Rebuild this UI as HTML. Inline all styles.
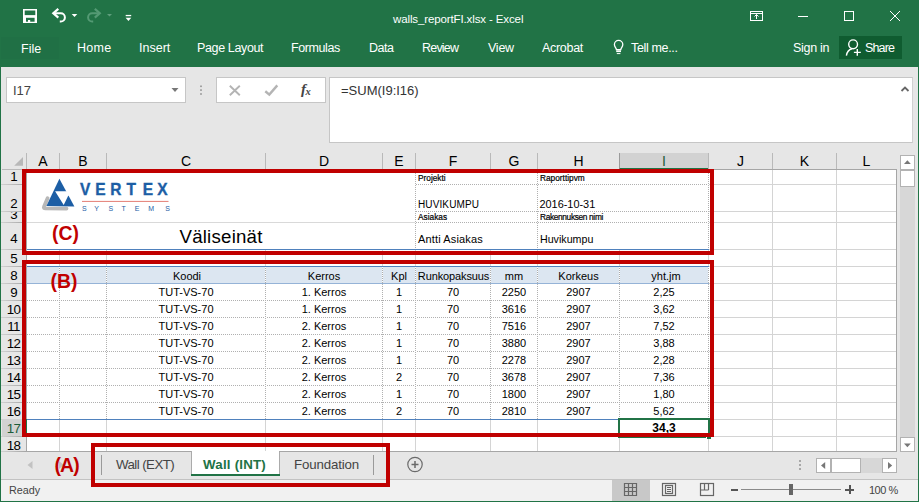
<!DOCTYPE html>
<html><head><meta charset="utf-8"><title>walls_reportFI.xlsx - Excel</title>
<style>
html,body{margin:0;padding:0;}
body{width:919px;height:502px;overflow:hidden;background:#e6e6e6;font-family:"Liberation Sans",sans-serif;}
#w{position:relative;width:919px;height:502px;overflow:hidden;background:#e6e6e6;}
#w div,#w span,#w svg{position:absolute;box-sizing:border-box;}
.t{white-space:nowrap;line-height:1;}
.rt{color:#fff;font-size:12.5px;top:42px;}
.ch{top:153px;height:16px;font-size:14px;text-align:center;line-height:17px;color:#000;}
.rh{left:1.5px;width:24px;font-size:13.33px;letter-spacing:-0.75px;text-align:center;color:#000;}
.c{font-size:11px;text-align:center;line-height:17px;height:17px;color:#000;white-space:nowrap;}
.s{font-size:8.3px;color:#000;white-space:nowrap;line-height:1;-webkit-text-stroke:0.2px #000;}
.v{color:#000;white-space:nowrap;line-height:1;}
.red{color:#c00000;font-weight:bold;font-size:19.4px;white-space:nowrap;line-height:1;}
.box{border:4px solid #c00000;}
</style></head><body><div id="w">

<div style="left:0;top:0;width:919px;height:67px;background:#217346"></div>
<div style="left:1px;top:37px;width:58px;height:22px;background:#207045"></div>
<svg style="left:0;top:0" width="160" height="34" viewBox="0 0 160 34">
<rect x="23" y="9" width="14" height="14" fill="#fff"/>
<rect x="24.700" y="10.500" width="10.600" height="4.600" fill="#217346"/>
<rect x="26" y="17.800" width="8.600" height="3.900" fill="#217346"/>
<rect x="28" y="20" width="2.200" height="2" fill="#fff"/>
<g fill="none" stroke="#fff" stroke-width="2" stroke-linecap="butt">
<path d="M54 13.300h6.800a4.100 4.100 0 0 1 0 8.200h-1"/>
<path d="M58.300 8.800l-5 4.400 5 4.400" stroke-width="2.200"/>
</g>
<path d="M71.700 14h5.600l-2.800 3z" fill="#fff"/>
<g fill="none" stroke="#549a74" stroke-width="2">
<path d="M99 13.300h-6.800a4.100 4.100 0 0 0 0 8.200h1"/>
<path d="M94.800 8.800l5 4.400-5 4.400" stroke-width="2.200"/>
</g>
<path d="M107 14h5l-2.500 2.500z" fill="#5f9e7c"/>
<rect x="125.700" y="14.900" width="5.500" height="1.300" fill="#fff"/>
<path d="M125.600 17.700h5.700l-2.850 3.300z" fill="#fff"/>
</svg>
<span class="t" style="left:393px;top:14px;color:#fff;font-size:11.5px;letter-spacing:-0.12px;">walls_reportFI.xlsx - Excel</span>
<svg style="left:740px;top:0" width="179" height="34" viewBox="740 0 179 34" fill="none" stroke="#fff" stroke-width="1">
<rect x="750.500" y="11.500" width="12" height="9"/><path d="M750.500 13.500h12" />
<path d="M756.500 19v-4.500M754.500 16.500l2-2 2 2"/>
<path d="M798 16.500h10"/>
<rect x="844.500" y="11.500" width="9" height="9"/>
<path d="M890 11l10 10M900 11l-10 10"/>
</svg>
<span class="t rt" style="left:21px;top:43px;">File</span>
<span class="t rt" style="left:77px;letter-spacing:0.3px;">Home</span>
<span class="t rt" style="left:139px;">Insert</span>
<span class="t rt" style="left:197px;letter-spacing:-0.36px;">Page Layout</span>
<span class="t rt" style="left:291px;letter-spacing:-0.4px;">Formulas</span>
<span class="t rt" style="left:369px;letter-spacing:-0.5px;">Data</span>
<span class="t rt" style="left:422px;letter-spacing:-0.8px;">Review</span>
<span class="t rt" style="left:488px;letter-spacing:-0.25px;">View</span>
<span class="t rt" style="left:542px;letter-spacing:-0.3px;">Acrobat</span>
<span class="t rt" style="left:631px;letter-spacing:-0.35px;">Tell me...</span>
<span class="t rt" style="left:793px;letter-spacing:-0.3px;">Sign in</span>
<svg style="left:610px;top:38px" width="16" height="20" viewBox="0 0 16 20" fill="none" stroke="#fff" stroke-width="1.300">
<path d="M6.400 11.600c0-1.700-2-2.500-2-5a4.200 4.200 0 0 1 8.400 0c0 2.500-2 3.300-2 5z"/><path d="M6.200 13.200h4.800" stroke-width="1.800"/><path d="M6.800 15.600h3.600" stroke-width="1"/></svg>
<div style="left:839px;top:36px;width:63px;height:23px;background:#0f5c30"></div>
<svg style="left:844px;top:38px" width="20" height="20" viewBox="0 0 20 20" fill="none" stroke="#fff" stroke-width="1.400">
<circle cx="9.100" cy="6.300" r="4.400"/><path d="M2.400 17.600c0.600-3.800 2.600-6 5.600-6.800"/><path d="M13.300 11v6.800M9.900 14.400h6.900"/></svg>
<span class="t rt" style="left:865px;letter-spacing:-0.85px">Share</span>
<div style="left:6px;top:77px;width:180px;height:26px;background:#fff;border:1px solid #c6c6c6"></div>
<span class="t" style="left:13px;top:84px;font-size:13px;color:#444">I17</span>
<svg style="left:170px;top:86px" width="10" height="8"><path d="M1.500 2h7l-3.500 4z" fill="#777"/></svg>
<svg style="left:199px;top:84px" width="4" height="12"><g fill="#a2a2a2"><rect x="1" y="1.500" width="2" height="1.600"/><rect x="1" y="5.300" width="2" height="1.600"/><rect x="1" y="9.200" width="2" height="1.600"/></g></svg>
<div style="left:216px;top:77px;width:110px;height:26px;background:#fff;border:1px solid #c6c6c6"></div>
<svg style="left:225px;top:82px" width="60" height="16" viewBox="225 82 60 16" fill="none" stroke="#b4b4b4" stroke-width="1.600">
<path d="M229.800 85.800l10 9.400M239.800 85.800l-10 9.400" stroke-width="1.900"/><path d="M265.300 91.300l4 3.300 8-9.200" stroke-width="2.400"/></svg>
<span class="t" style="left:301px;top:82px;font-family:'Liberation Serif',serif;font-style:italic;font-size:15px;color:#444;font-weight:bold;letter-spacing:-0.5px">f<span style="position:static;font-size:10.5px;vertical-align:-1px">x</span></span>
<div style="left:329px;top:77px;width:584px;height:66px;background:#fff;border:1px solid #c6c6c6;border-right-color:#d0d0d0"></div>
<span class="t" style="left:341px;top:84px;font-size:13px;color:#333">=SUM(I9:I16)</span>
<svg style="left:900px;top:84px" width="10" height="9" fill="none" stroke="#666" stroke-width="1.800"><path d="M1.500 7l3.500-3.500 3.500 3.500"/></svg>
<div style="left:2px;top:153px;width:895px;height:17px;background:#e6e6e6;border-bottom:1px solid #a6a6a6"></div>
<div style="left:27px;top:170px;width:870px;height:282px;background:#fff;border-right:1px solid #a6a6a6;border-bottom:1px solid #a6a6a6"></div>
<svg style="left:12px;top:156px" width="14" height="12"><path d="M11 1v8.800h-8.800z" fill="#b8b8b8"/></svg>
<div style="left:2px;top:169px;width:24px;height:1px;background:#b9b9b9"></div>
<div class="ch" style="left:27px;width:32px;">A</div>
<div style="left:59px;top:153px;width:1px;height:16px;background:#b9b9b9"></div>
<div class="ch" style="left:60px;width:46px;">B</div>
<div style="left:106px;top:153px;width:1px;height:16px;background:#b9b9b9"></div>
<div class="ch" style="left:107px;width:158px;">C</div>
<div style="left:265px;top:153px;width:1px;height:16px;background:#b9b9b9"></div>
<div class="ch" style="left:266px;width:116px;">D</div>
<div style="left:382px;top:153px;width:1px;height:16px;background:#b9b9b9"></div>
<div class="ch" style="left:383px;width:32px;">E</div>
<div style="left:415px;top:153px;width:1px;height:16px;background:#b9b9b9"></div>
<div class="ch" style="left:416px;width:74px;">F</div>
<div style="left:490px;top:153px;width:1px;height:16px;background:#b9b9b9"></div>
<div class="ch" style="left:491px;width:46px;">G</div>
<div style="left:537px;top:153px;width:1px;height:16px;background:#b9b9b9"></div>
<div class="ch" style="left:538px;width:81px;">H</div>
<div style="left:619px;top:153px;width:1px;height:16px;background:#b9b9b9"></div>
<div style="left:619px;top:153px;width:89px;height:17px;background:#d2d2d2;border-bottom:2px solid #217346;border-left:1px solid #9b9b9b"></div>
<div class="ch" style="left:620px;width:88px;color:#1c5c3a;">I</div>
<div style="left:708px;top:153px;width:1px;height:16px;background:#b9b9b9"></div>
<div class="ch" style="left:709px;width:63px;">J</div>
<div style="left:772px;top:153px;width:1px;height:16px;background:#b9b9b9"></div>
<div class="ch" style="left:773px;width:63px;">K</div>
<div style="left:836px;top:153px;width:1px;height:16px;background:#b9b9b9"></div>
<div class="ch" style="left:837px;width:59px;">L</div>
<div style="left:26px;top:153px;width:1px;height:16px;background:#b9b9b9"></div>
<div class="rh" style="top:167px;height:17px;line-height:19px;">1</div>
<div style="left:1px;top:184px;width:25px;height:1px;background:linear-gradient(90deg,#d2d2d2,#a4a4a4)"></div>
<div class="rh" style="top:194px;height:17px;line-height:19px;">2</div>
<div style="left:1px;top:211px;width:25px;height:1px;background:linear-gradient(90deg,#d2d2d2,#a4a4a4)"></div>
<div class="rh" style="top:212px;height:10px;line-height:5px;overflow:hidden">3</div>
<div style="left:1px;top:222px;width:25px;height:1px;background:linear-gradient(90deg,#d2d2d2,#a4a4a4)"></div>
<div class="rh" style="top:229px;height:17px;line-height:19px;">4</div>
<div style="left:1px;top:249px;width:25px;height:1px;background:linear-gradient(90deg,#d2d2d2,#a4a4a4)"></div>
<div class="rh" style="top:249px;height:17px;line-height:19px;">5</div>
<div style="left:1px;top:266px;width:25px;height:1px;background:linear-gradient(90deg,#d2d2d2,#a4a4a4)"></div>
<div class="rh" style="top:266px;height:17px;line-height:19px;">8</div>
<div style="left:1px;top:283px;width:25px;height:1px;background:linear-gradient(90deg,#d2d2d2,#a4a4a4)"></div>
<div class="rh" style="top:283px;height:17px;line-height:19px;">9</div>
<div style="left:1px;top:300px;width:25px;height:1px;background:linear-gradient(90deg,#d2d2d2,#a4a4a4)"></div>
<div class="rh" style="top:300px;height:17px;line-height:19px;">10</div>
<div style="left:1px;top:317px;width:25px;height:1px;background:linear-gradient(90deg,#d2d2d2,#a4a4a4)"></div>
<div class="rh" style="top:317px;height:17px;line-height:19px;">11</div>
<div style="left:1px;top:334px;width:25px;height:1px;background:linear-gradient(90deg,#d2d2d2,#a4a4a4)"></div>
<div class="rh" style="top:334px;height:17px;line-height:19px;">12</div>
<div style="left:1px;top:351px;width:25px;height:1px;background:linear-gradient(90deg,#d2d2d2,#a4a4a4)"></div>
<div class="rh" style="top:351px;height:17px;line-height:19px;">13</div>
<div style="left:1px;top:368px;width:25px;height:1px;background:linear-gradient(90deg,#d2d2d2,#a4a4a4)"></div>
<div class="rh" style="top:368px;height:17px;line-height:19px;">14</div>
<div style="left:1px;top:385px;width:25px;height:1px;background:linear-gradient(90deg,#d2d2d2,#a4a4a4)"></div>
<div class="rh" style="top:385px;height:17px;line-height:19px;">15</div>
<div style="left:1px;top:402px;width:25px;height:1px;background:linear-gradient(90deg,#d2d2d2,#a4a4a4)"></div>
<div class="rh" style="top:402px;height:17px;line-height:19px;">16</div>
<div style="left:1px;top:419px;width:25px;height:1px;background:linear-gradient(90deg,#d2d2d2,#a4a4a4)"></div>
<div style="left:2px;top:419px;width:25px;height:18px;background:#d2d2d2;border-right:2px solid #217346"></div>
<div class="rh" style="top:419px;height:17px;line-height:19px;color:#1c5c3a;">17</div>
<div style="left:1px;top:436px;width:25px;height:1px;background:linear-gradient(90deg,#d2d2d2,#a4a4a4)"></div>
<div class="rh" style="top:437px;height:14px;line-height:17px;overflow:hidden">18</div>
<div style="left:1px;top:451px;width:25px;height:1px;background:linear-gradient(90deg,#d2d2d2,#a4a4a4)"></div>
<div style="left:26px;top:170px;width:1px;height:282px;background:#a6a6a6"></div>
<div style="left:25px;top:419px;width:2px;height:18px;background:#217346"></div>
<div style="left:59px;top:170px;width:1px;height:281px;background:#d4d4d4"></div>
<div style="left:106px;top:170px;width:1px;height:281px;background:#d4d4d4"></div>
<div style="left:265px;top:170px;width:1px;height:281px;background:#d4d4d4"></div>
<div style="left:382px;top:170px;width:1px;height:281px;background:#d4d4d4"></div>
<div style="left:415px;top:170px;width:1px;height:281px;background:#d4d4d4"></div>
<div style="left:490px;top:170px;width:1px;height:281px;background:#d4d4d4"></div>
<div style="left:537px;top:170px;width:1px;height:281px;background:#d4d4d4"></div>
<div style="left:619px;top:170px;width:1px;height:281px;background:#d4d4d4"></div>
<div style="left:708px;top:170px;width:1px;height:281px;background:#d4d4d4"></div>
<div style="left:772px;top:170px;width:1px;height:281px;background:#d4d4d4"></div>
<div style="left:836px;top:170px;width:1px;height:281px;background:#d4d4d4"></div>
<div style="left:27px;top:184px;width:869px;height:1px;background:#d4d4d4"></div>
<div style="left:27px;top:211px;width:869px;height:1px;background:#d4d4d4"></div>
<div style="left:27px;top:222px;width:869px;height:1px;background:#d4d4d4"></div>
<div style="left:27px;top:249px;width:869px;height:1px;background:#d4d4d4"></div>
<div style="left:27px;top:266px;width:869px;height:1px;background:#d4d4d4"></div>
<div style="left:27px;top:283px;width:869px;height:1px;background:#d4d4d4"></div>
<div style="left:27px;top:300px;width:869px;height:1px;background:#d4d4d4"></div>
<div style="left:27px;top:317px;width:869px;height:1px;background:#d4d4d4"></div>
<div style="left:27px;top:334px;width:869px;height:1px;background:#d4d4d4"></div>
<div style="left:27px;top:351px;width:869px;height:1px;background:#d4d4d4"></div>
<div style="left:27px;top:368px;width:869px;height:1px;background:#d4d4d4"></div>
<div style="left:27px;top:385px;width:869px;height:1px;background:#d4d4d4"></div>
<div style="left:27px;top:402px;width:869px;height:1px;background:#d4d4d4"></div>
<div style="left:27px;top:419px;width:869px;height:1px;background:#d4d4d4"></div>
<div style="left:27px;top:436px;width:869px;height:1px;background:#d4d4d4"></div>
<div style="left:27px;top:170px;width:681px;height:79px;background:#fff"></div>
<div style="left:27px;top:222px;width:388px;height:1px;background:#d9d9d9"></div>
<div style="left:416px;top:184px;width:292px;height:1px;background:repeating-linear-gradient(90deg,#b0b0b0 0 1px,#fff 1px 2px)"></div>
<div style="left:416px;top:211px;width:292px;height:1px;background:repeating-linear-gradient(90deg,#b0b0b0 0 1px,#fff 1px 2px)"></div>
<div style="left:416px;top:222px;width:292px;height:1px;background:repeating-linear-gradient(90deg,#b0b0b0 0 1px,#fff 1px 2px)"></div>
<div style="left:415px;top:173px;width:1px;height:76px;background:repeating-linear-gradient(180deg,#b0b0b0 0 1px,#fff 1px 2px)"></div>
<div style="left:537px;top:173px;width:1px;height:76px;background:repeating-linear-gradient(180deg,#b0b0b0 0 1px,#fff 1px 2px)"></div>
<div style="left:708px;top:173px;width:1px;height:76px;background:repeating-linear-gradient(180deg,#b0b0b0 0 1px,#fff 1px 2px)"></div>
<div style="left:27px;top:249px;width:682px;height:1px;background:#4f81bd"></div>
<div style="left:27px;top:267px;width:681px;height:152px;background:#fff"></div>
<div style="left:27px;top:267px;width:682px;height:16px;background:#dce6f1"></div>
<div style="left:27px;top:300px;width:681px;height:1px;background:repeating-linear-gradient(90deg,#b0b0b0 0 1px,#fff 1px 2px)"></div>
<div style="left:27px;top:317px;width:681px;height:1px;background:repeating-linear-gradient(90deg,#b0b0b0 0 1px,#fff 1px 2px)"></div>
<div style="left:27px;top:334px;width:681px;height:1px;background:repeating-linear-gradient(90deg,#b0b0b0 0 1px,#fff 1px 2px)"></div>
<div style="left:27px;top:351px;width:681px;height:1px;background:repeating-linear-gradient(90deg,#b0b0b0 0 1px,#fff 1px 2px)"></div>
<div style="left:27px;top:368px;width:681px;height:1px;background:repeating-linear-gradient(90deg,#b0b0b0 0 1px,#fff 1px 2px)"></div>
<div style="left:27px;top:385px;width:681px;height:1px;background:repeating-linear-gradient(90deg,#b0b0b0 0 1px,#fff 1px 2px)"></div>
<div style="left:27px;top:402px;width:681px;height:1px;background:repeating-linear-gradient(90deg,#b0b0b0 0 1px,#fff 1px 2px)"></div>
<div style="left:59px;top:284px;width:1px;height:135px;background:repeating-linear-gradient(180deg,#b0b0b0 0 1px,#fff 1px 2px)"></div>
<div style="left:59px;top:267px;width:1px;height:16px;background:repeating-linear-gradient(180deg,#fff 0 1px,#ababab 1px 2px)"></div>
<div style="left:106px;top:284px;width:1px;height:135px;background:repeating-linear-gradient(180deg,#b0b0b0 0 1px,#fff 1px 2px)"></div>
<div style="left:106px;top:267px;width:1px;height:16px;background:repeating-linear-gradient(180deg,#fff 0 1px,#ababab 1px 2px)"></div>
<div style="left:265px;top:284px;width:1px;height:135px;background:repeating-linear-gradient(180deg,#b0b0b0 0 1px,#fff 1px 2px)"></div>
<div style="left:265px;top:267px;width:1px;height:16px;background:repeating-linear-gradient(180deg,#fff 0 1px,#ababab 1px 2px)"></div>
<div style="left:382px;top:284px;width:1px;height:135px;background:repeating-linear-gradient(180deg,#b0b0b0 0 1px,#fff 1px 2px)"></div>
<div style="left:382px;top:267px;width:1px;height:16px;background:repeating-linear-gradient(180deg,#fff 0 1px,#ababab 1px 2px)"></div>
<div style="left:415px;top:284px;width:1px;height:135px;background:repeating-linear-gradient(180deg,#b0b0b0 0 1px,#fff 1px 2px)"></div>
<div style="left:415px;top:267px;width:1px;height:16px;background:repeating-linear-gradient(180deg,#fff 0 1px,#ababab 1px 2px)"></div>
<div style="left:490px;top:284px;width:1px;height:135px;background:repeating-linear-gradient(180deg,#b0b0b0 0 1px,#fff 1px 2px)"></div>
<div style="left:490px;top:267px;width:1px;height:16px;background:repeating-linear-gradient(180deg,#fff 0 1px,#ababab 1px 2px)"></div>
<div style="left:537px;top:284px;width:1px;height:135px;background:repeating-linear-gradient(180deg,#b0b0b0 0 1px,#fff 1px 2px)"></div>
<div style="left:537px;top:267px;width:1px;height:16px;background:repeating-linear-gradient(180deg,#fff 0 1px,#ababab 1px 2px)"></div>
<div style="left:619px;top:284px;width:1px;height:135px;background:repeating-linear-gradient(180deg,#b0b0b0 0 1px,#fff 1px 2px)"></div>
<div style="left:619px;top:267px;width:1px;height:16px;background:repeating-linear-gradient(180deg,#fff 0 1px,#ababab 1px 2px)"></div>
<div style="left:708px;top:284px;width:1px;height:135px;background:repeating-linear-gradient(180deg,#b0b0b0 0 1px,#fff 1px 2px)"></div>
<div style="left:708px;top:267px;width:1px;height:16px;background:repeating-linear-gradient(180deg,#fff 0 1px,#ababab 1px 2px)"></div>
<div style="left:27px;top:266px;width:682px;height:1px;background:#4f81bd"></div>
<div style="left:27px;top:283px;width:682px;height:1px;background:#95b3d7"></div>
<div style="left:27px;top:419px;width:682px;height:1px;background:#4f81bd"></div>
<svg style="left:38px;top:175px" width="140" height="40" viewBox="38 175 140 40">
<path d="M47.600 198.300l-3.600 8.400q-0.700 1.700 1.500 1.700l21 0.200" fill="none" stroke="#b8b8b8" stroke-width="3.800" stroke-linecap="round" stroke-linejoin="round"/>
<path d="M59.400 178.800l15 27.700-28-0.600z" fill="#1c5ea5"/>
<path d="M55.100 191.300h12l2.200 4.200-1.100 0.200-4.500 9.400z" fill="#fff"/>
<rect x="82" y="200.900" width="86.500" height="1" fill="#e47e74"/>
<text y="195.300" x="79.900 95.200 110.300 126.400 142.700 157.300" font-family="Liberation Sans, sans-serif" font-weight="bold" font-size="15.500" fill="#1c5ea5" stroke="#1c5ea5" stroke-width="0.350" transform="translate(0 195.300) scale(1 1.050) translate(0 -195.300)">VERTEX</text>
<text y="210.700" x="81.900 94.300 108.500 121.600 134.700 148.200 165.200" font-family="Liberation Sans, sans-serif" font-size="7" fill="#1c5ea5">SYSTEMS</text>
</svg>
<span class="t" style="left:179.500px;top:228px;font-size:18.670px;letter-spacing:0.220px;color:#000">Väliseinät</span>
<span class="red" style="left:52px;top:223.500px">(C)</span>
<span class="red" style="left:50.500px;top:271.500px">(B)</span>
<span class="s" style="left:418px;top:174px">Projekti</span>
<span class="s" style="left:540px;top:174px">Raporttipvm</span>
<span class="s" style="left:418px;top:212.500px">Asiakas</span>
<span class="s" style="left:540px;top:212.500px;letter-spacing:-0.330px">Rakennuksen nimi</span>
<span class="v" style="left:418px;top:200px;font-size:10px;letter-spacing:0.120px">HUVIKUMPU</span>
<span class="v" style="left:539.500px;top:199px;font-size:10.900px">2016-10-31</span>
<span class="v" style="left:418px;top:234px;font-size:11px;letter-spacing:0.150px">Antti Asiakas</span>
<span class="v" style="left:540px;top:233.500px;font-size:10.670px">Huvikumpu</span>
<div class="c" style="left:105px;width:164px;top:268px;">Koodi</div>
<div class="c" style="left:262px;width:124px;top:268px;">Kerros</div>
<div class="c" style="left:379px;width:40px;top:268px;">Kpl</div>
<div class="c" style="left:413px;width:81px;top:268px;letter-spacing:-0.120px;">Runkopaksuus</div>
<div class="c" style="left:487px;width:54px;top:268px;">mm</div>
<div class="c" style="left:534px;width:89px;top:268px;">Korkeus</div>
<div class="c" style="left:620px;width:92px;top:268px;">yht.jm</div>
<div class="c" style="left:103px;width:166px;top:284px;">TUT-VS-70</div>
<div class="c" style="left:262px;width:124px;top:284px;">1. Kerros</div>
<div class="c" style="left:379px;width:40px;top:284px;">1</div>
<div class="c" style="left:412px;width:82px;top:284px;">70</div>
<div class="c" style="left:487px;width:54px;top:284px;">2250</div>
<div class="c" style="left:534px;width:89px;top:284px;">2907</div>
<div class="c" style="left:616px;width:96px;top:284px;">2,25</div>
<div class="c" style="left:103px;width:166px;top:301px;">TUT-VS-70</div>
<div class="c" style="left:262px;width:124px;top:301px;">1. Kerros</div>
<div class="c" style="left:379px;width:40px;top:301px;">1</div>
<div class="c" style="left:412px;width:82px;top:301px;">70</div>
<div class="c" style="left:487px;width:54px;top:301px;">3616</div>
<div class="c" style="left:534px;width:89px;top:301px;">2907</div>
<div class="c" style="left:616px;width:96px;top:301px;">3,62</div>
<div class="c" style="left:103px;width:166px;top:318px;">TUT-VS-70</div>
<div class="c" style="left:262px;width:124px;top:318px;">2. Kerros</div>
<div class="c" style="left:379px;width:40px;top:318px;">1</div>
<div class="c" style="left:412px;width:82px;top:318px;">70</div>
<div class="c" style="left:487px;width:54px;top:318px;">7516</div>
<div class="c" style="left:534px;width:89px;top:318px;">2907</div>
<div class="c" style="left:616px;width:96px;top:318px;">7,52</div>
<div class="c" style="left:103px;width:166px;top:335px;">TUT-VS-70</div>
<div class="c" style="left:262px;width:124px;top:335px;">2. Kerros</div>
<div class="c" style="left:379px;width:40px;top:335px;">1</div>
<div class="c" style="left:412px;width:82px;top:335px;">70</div>
<div class="c" style="left:487px;width:54px;top:335px;">3880</div>
<div class="c" style="left:534px;width:89px;top:335px;">2907</div>
<div class="c" style="left:616px;width:96px;top:335px;">3,88</div>
<div class="c" style="left:103px;width:166px;top:352px;">TUT-VS-70</div>
<div class="c" style="left:262px;width:124px;top:352px;">2. Kerros</div>
<div class="c" style="left:379px;width:40px;top:352px;">1</div>
<div class="c" style="left:412px;width:82px;top:352px;">70</div>
<div class="c" style="left:487px;width:54px;top:352px;">2278</div>
<div class="c" style="left:534px;width:89px;top:352px;">2907</div>
<div class="c" style="left:616px;width:96px;top:352px;">2,28</div>
<div class="c" style="left:103px;width:166px;top:369px;">TUT-VS-70</div>
<div class="c" style="left:262px;width:124px;top:369px;">2. Kerros</div>
<div class="c" style="left:379px;width:40px;top:369px;">2</div>
<div class="c" style="left:412px;width:82px;top:369px;">70</div>
<div class="c" style="left:487px;width:54px;top:369px;">3678</div>
<div class="c" style="left:534px;width:89px;top:369px;">2907</div>
<div class="c" style="left:616px;width:96px;top:369px;">7,36</div>
<div class="c" style="left:103px;width:166px;top:386px;">TUT-VS-70</div>
<div class="c" style="left:262px;width:124px;top:386px;">2. Kerros</div>
<div class="c" style="left:379px;width:40px;top:386px;">1</div>
<div class="c" style="left:412px;width:82px;top:386px;">70</div>
<div class="c" style="left:487px;width:54px;top:386px;">1800</div>
<div class="c" style="left:534px;width:89px;top:386px;">2907</div>
<div class="c" style="left:616px;width:96px;top:386px;">1,80</div>
<div class="c" style="left:103px;width:166px;top:403px;">TUT-VS-70</div>
<div class="c" style="left:262px;width:124px;top:403px;">2. Kerros</div>
<div class="c" style="left:379px;width:40px;top:403px;">2</div>
<div class="c" style="left:412px;width:82px;top:403px;">70</div>
<div class="c" style="left:487px;width:54px;top:403px;">2810</div>
<div class="c" style="left:534px;width:89px;top:403px;">2907</div>
<div class="c" style="left:616px;width:96px;top:403px;">5,62</div>
<div class="c" style="left:620px;width:88px;top:420px;font-weight:bold;font-size:12px">34,3</div>
<div style="left:618px;top:418px;width:92px;height:20px;border:2px solid #217346"></div>
<div style="left:706px;top:434px;width:5px;height:5px;background:#217346;border:1px solid #fff;border-right:0;border-bottom:0"></div>
<div style="left:900px;top:155px;width:15px;height:297px;background:#d7d7d7"></div>
<div style="left:900px;top:155px;width:15px;height:15px;background:#fff;border:1px solid #b2b2b2"></div>
<svg style="left:903px;top:159px" width="9" height="7"><path d="M1 5l3.400-3.700 3.400 3.700z" fill="#777"/></svg>
<div style="left:900px;top:170px;width:15px;height:17px;background:#fff;border:1px solid #b2b2b2"></div>
<div style="left:900px;top:437px;width:15px;height:15px;background:#fff;border:1px solid #b2b2b2"></div>
<svg style="left:903px;top:442px" width="9" height="7"><path d="M1 1.500l3.400 3.700 3.400-3.700z" fill="#777"/></svg>
<div style="left:1px;top:452px;width:917px;height:27px;background:#e6e6e6"></div>
<svg style="left:26px;top:460px" width="8" height="10"><path d="M6.500 1v8l-5-4z" fill="#c2c2c2"/></svg>
<svg style="left:58px;top:460px" width="8" height="10"><path d="M1 1v8l5-4z" fill="#c2c2c2"/></svg>
<div style="left:101px;top:455px;width:1px;height:20px;background:#9a9a9a"></div>
<div style="left:191px;top:451px;width:89px;height:25px;background:#fff;border-bottom:2px solid #217346"></div>
<div style="left:102px;top:451px;width:90px;height:1px;background:#a6a6a6"></div>
<div style="left:191px;top:451px;width:1px;height:23px;background:#ababab"></div>
<div style="left:279px;top:451px;width:1px;height:23px;background:#ababab"></div>
<div style="left:279px;top:451px;width:95px;height:1px;background:#a6a6a6"></div>
<div style="left:373px;top:455px;width:1px;height:20px;background:#9a9a9a"></div>
<span class="t" style="left:116px;top:458px;font-size:13.300px;letter-spacing:-0.560px;color:#444">Wall (EXT)</span>
<span class="t" style="left:203px;top:458px;font-size:13.300px;color:#217346;font-weight:bold;letter-spacing:0.220px">Wall (INT)</span>
<span class="t" style="left:294px;top:458px;font-size:13.300px;color:#444;letter-spacing:-0.150px">Foundation</span>
<svg style="left:406px;top:456px" width="18" height="18" fill="none" stroke="#6a6a6a" stroke-width="1.200"><circle cx="9" cy="8.500" r="7.200"/><path d="M9 5v7M5.500 8.500h7" stroke-width="1.500"/></svg>
<span class="red" style="left:54.500px;top:456px;letter-spacing:-0.900px">(A)</span>
<svg style="left:798px;top:459px" width="4" height="12"><g fill="#a8a8a8"><rect x="1" y="1" width="2" height="2"/><rect x="1" y="5" width="2" height="2"/><rect x="1" y="9" width="2" height="2"/></g></svg>
<div style="left:816px;top:458px;width:81px;height:15px;background:#d7d7d7"></div>
<div style="left:816px;top:458px;width:15px;height:15px;background:#fff;border:1px solid #b2b2b2"></div>
<svg style="left:820px;top:461px" width="7" height="9"><path d="M5.200 1l-4.200 3.500 4.200 3.500z" fill="#777"/></svg>
<div style="left:831px;top:458px;width:30px;height:15px;background:#fff;border:1px solid #b2b2b2"></div>
<div style="left:882px;top:458px;width:15px;height:15px;background:#fff;border:1px solid #b2b2b2"></div>
<svg style="left:887px;top:461px" width="7" height="9"><path d="M1 1l4.200 3.500-4.200 3.500z" fill="#777"/></svg>
<div style="left:1px;top:479px;width:917px;height:22px;background:#f1f1f1;border-top:1px solid #c2c2c2"></div>
<span class="t" style="left:9px;top:485px;font-size:10.800px;color:#444">Ready</span>
<div style="left:612px;top:480px;width:38px;height:21px;background:#c8c8c8"></div>
<svg style="left:620px;top:480px" width="100" height="20" viewBox="620 480 100 20" fill="none" stroke="#666" stroke-width="1.200">
<path d="M624.500 483.500h12v12h-12zM628.500 483.500v12M632.500 483.500v12M624.500 487.500h12M624.500 491.500h12"/>
<rect x="662.500" y="483.500" width="13" height="12"/><rect x="665.500" y="485.500" width="7" height="8"/><path d="M667 487.500h4M667 489.500h4M667 491.500h4" stroke-width="1"/>
<rect x="700.500" y="483.500" width="13" height="12"/><path d="M704.500 483.500v6.500M708.500 483.500v6.500M700.500 490h8"/>
</svg>
<div style="left:731px;top:489px;width:7px;height:2px;background:#555"></div>
<div style="left:741px;top:489px;width:100px;height:1px;background:#8a8a8a"></div>
<div style="left:789px;top:484px;width:4px;height:11px;background:#666"></div>
<div style="left:845px;top:489px;width:9px;height:2px;background:#555"></div><div style="left:848.500px;top:485px;width:2px;height:9px;background:#555"></div>
<span class="t" style="left:869px;top:485px;font-size:11px;letter-spacing:-0.500px;color:#444">100 %</span>
<div class="box" style="left:22px;top:169px;width:692px;height:86px"></div>
<div class="box" style="left:22px;top:260px;width:692px;height:177px"></div>
<div class="box" style="left:91px;top:443px;width:299px;height:44px"></div>
<div style="left:0;top:0;width:1px;height:502px;background:#217346"></div>
<div style="left:918px;top:0;width:1px;height:502px;background:#217346"></div>
<div style="left:0;top:501px;width:919px;height:1px;background:#217346"></div>
</div></body></html>
